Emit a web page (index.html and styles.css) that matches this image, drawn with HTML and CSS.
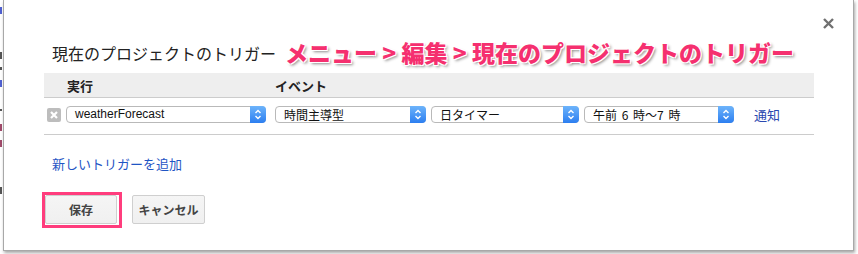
FILE: index.html
```html
<!DOCTYPE html>
<html lang="ja">
<head>
    <meta charset="UTF-8">
    <title>現在のプロジェクトのトリガー</title>
    <link rel="stylesheet" href="styles.css">
</head>
<body>
    <div class="backdrop">
        <span class="mark bd-blue bd-1"></span>
        <span class="mark bd-dark bd-2"></span>
        <span class="mark bd-dark bd-3"></span>
        <span class="mark bd-blue bd-4"></span>
        <span class="mark bd-dark bd-5"></span>
        <span class="mark bd-red bd-6"></span>
        <span class="mark bd-red bd-7"></span>
        <span class="mark bd-dark bd-8"></span>
    </div>
    <div class="dialog">
        <a class="close" href="#">
            <svg width="11" height="11" viewBox="0 0 11 11"><path d="M1 1L10 10M10 1L1 10" stroke="#707070" stroke-width="2.4"/></svg>
        </a>
        <div class="title-row">
            <h2 class="title">現在のプロジェクトのトリガー</h2>
            <span class="note">メニュー &gt; 編集 &gt; 現在のプロジェクトのトリガー</span>
        </div>
        <div class="triggers">
            <div class="head">
                <span class="col-run">実行</span>
                <span class="col-event">イベント</span>
            </div>
            <div class="row">
                <span class="remove">
                    <svg width="14" height="14" viewBox="0 0 14 14"><path d="M4 4L10 10M10 4L4 10" stroke="#fff" stroke-width="2.2"/></svg>
                </span>
                <div class="select sel-fn"><span class="value latin">weatherForecast</span><span class="arrow"></span></div>
                <div class="select sel-type"><span class="value">時間主導型</span><span class="arrow"></span></div>
                <div class="select sel-timer"><span class="value">日タイマー</span><span class="arrow"></span></div>
                <div class="select sel-hour"><span class="value">午前&nbsp;6&nbsp;時〜7&nbsp;時</span><span class="arrow"></span></div>
                <a class="notify" href="#">通知</a>
            </div>
        </div>
        <a class="add-link" href="#">新しいトリガーを追加</a>
        <div class="buttons">
            <span class="highlight"><button class="btn">保存</button></span>
            <button class="btn">キャンセル</button>
        </div>
    </div>
</body>
</html>
```

FILE: styles.css
```css
body {
    margin: 0;
    display: flex;
    background: #fff;
    font-family: "Liberation Sans", "Noto Sans CJK JP", sans-serif;
    color: #222;
    height: 254px;
    overflow: hidden;
}
.backdrop {
    width: 3px;
    display: flex;
    flex-direction: column;
}
.mark {
    display: block;
    width: 2px;
    height: 7px;
}
.bd-blue { background: #5060d0; }
.bd-dark { background: #555; }
.bd-red { background: #a04a6a; }
.bd-1 { margin-top: 7px; }
.bd-2 { margin-top: 38px; }
.bd-3 { margin-top: 8px; height: 3px; }
.bd-4 { margin-top: 10px; }
.bd-5 { margin-top: 22px; height: 2px; }
.bd-6 { margin-top: 13px; }
.bd-7 { margin-top: 9px; }
.bd-8 { margin-top: 40px; }

.dialog {
    position: relative;
    width: 849px;
    height: 250px;
    background: #fff;
    border: 1px solid #a8a8a8;
    border-top: none;
    box-shadow: 1px 2px 3px rgba(0, 0, 0, 0.35);
}
.close {
    position: absolute;
    top: 18px;
    right: 19px;
    display: block;
    width: 11px;
    height: 11px;
}
.close svg { display: block; }

.title-row {
    display: flex;
    align-items: center;
    height: 30px;
    margin-top: 38px;
    padding-left: 48px;
}
.title {
    margin: 0;
    font-family: "Noto Sans CJK JP", sans-serif;
    font-size: 16px;
    font-weight: normal;
    color: #222;
}
.note {
    margin-left: 9px;
    margin-top: -3px;
    font-family: "Noto Sans CJK JP", sans-serif;
    font-size: 23px;
    font-weight: 900;
    color: #f5306f;
    text-shadow: 0 0 1px #fff, 1px 1px 0 #fff, -1px -1px 0 #fff, 1px -1px 0 #fff, -1px 1px 0 #fff, 2px 2px 3px rgba(0, 0, 0, 0.45);
}

.triggers {
    margin: 5px 0 0 40px;
    width: 770px;
}
.head {
    display: flex;
    align-items: center;
    height: 24px;
    background: #eee;
    border-bottom: 1px solid #ccc;
    font-family: "Noto Sans CJK JP", sans-serif;
    font-size: 13px;
    font-weight: bold;
    color: #222;
}
.col-run {
    margin-left: 23px;
    width: 208px;
}
.row {
    display: flex;
    align-items: center;
    height: 37px;
    padding-bottom: 3px;
    box-sizing: border-box;
    border-bottom: 1px solid #ccc;
}
.remove {
    width: 14px;
    height: 14px;
    margin-left: 3px;
    margin-right: 5px;
    background: #bdbdbd;
    border-radius: 2px;
}
.remove svg { display: block; }
.select {
    display: flex;
    height: 17px;
    box-sizing: border-box;
    border: 1px solid #b9b9b9;
    border-radius: 4px;
    background: #fff;
    font-family: "Noto Sans CJK JP", sans-serif;
    font-size: 12px;
    color: #111;
    margin-right: 5px;
}
.select .value {
    flex: 1;
    padding-left: 8px;
    line-height: 15px;
    white-space: nowrap;
    word-spacing: 2px;
}
.select .latin {
    font-family: "Liberation Sans", sans-serif;
}
.select .arrow {
    width: 16px;
    margin: -1px -1px -1px 0;
    border-radius: 0 4px 4px 0;
    background-color: #3b8bf3;
    background-image:
        url("data:image/svg+xml;utf8,<svg xmlns='http://www.w3.org/2000/svg' width='16' height='17' viewBox='0 0 16 17'><path d='M5.5 7L8 4.5L10.5 7M5.5 10L8 12.5L10.5 10' fill='none' stroke='white' stroke-width='1.4'/></svg>"),
        linear-gradient(#6db4fb, #2c7ef0);
}
.sel-fn { width: 200px; margin-right: 9px; }
.sel-type { width: 151px; }
.sel-timer { width: 148px; }
.sel-hour { width: 150px; }
.notify {
    margin-left: 15px;
    font-family: "Noto Sans CJK JP", sans-serif;
    font-size: 13px;
    color: #2a48b0;
    text-decoration: none;
}

.add-link {
    display: block;
    margin: 19px 0 0 48px;
    width: max-content;
    font-family: "Noto Sans CJK JP", sans-serif;
    font-size: 13px;
    line-height: 20px;
    color: #1f55c4;
    text-decoration: none;
}
.buttons {
    display: flex;
    align-items: flex-start;
    margin: 18px 0 0 38px;
}
.highlight {
    display: block;
    border: 3px solid #ff3d7d;
    padding: 0 2px 1px 0;
    margin-right: 10px;
}
.btn {
    display: block;
    height: 29px;
    width: 72px;
    padding: 0;
    background: linear-gradient(#f5f5f5, #f0f0f0);
    border: 1px solid #cfcfcf;
    border-radius: 2px;
    font-family: "Noto Sans CJK JP", sans-serif;
    font-size: 12px;
    font-weight: bold;
    color: #444;
}
.buttons > .btn {
    margin-top: 3px;
    width: 73px;
}
```
